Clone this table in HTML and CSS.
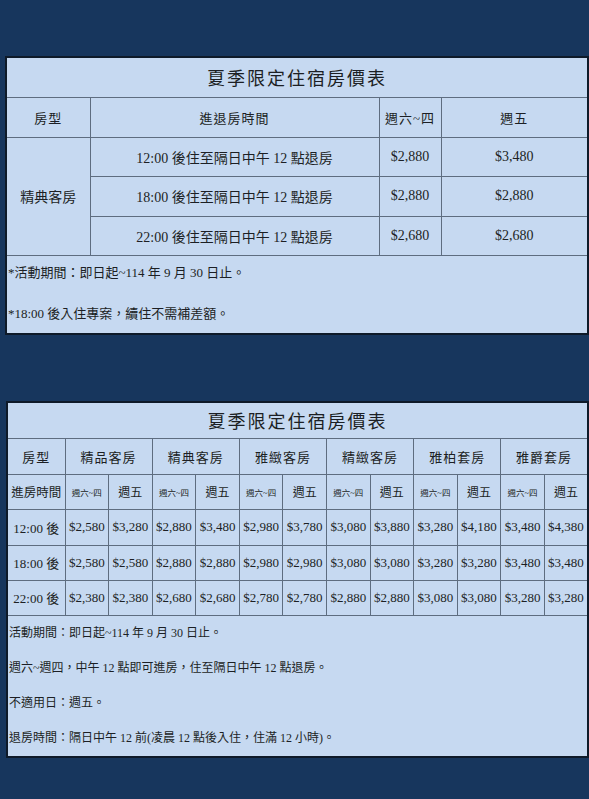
FILE: index.html
```html
<!DOCTYPE html>
<html lang="zh-Hant">
<head>
<meta charset="utf-8">
<title>夏季限定住宿房價表</title>
<link rel="stylesheet" href="styles.css">
</head>
<body>
<main class="page">
  <table class="t1">
    <colgroup>
      <col class="c1-type"><col class="c1-time"><col class="c1-wk"><col class="c1-fri">
    </colgroup>
    <tr class="r-title"><td colspan="4" class="title">夏季限定住宿房價表</td></tr>
    <tr class="r-head"><td>房型</td><td>進退房時間</td><td>週六~四</td><td>週五</td></tr>
    <tr class="r-a"><td rowspan="3">精典客房</td><td>12:00 後住至隔日中午 12 點退房</td><td>$2,880</td><td>$3,480</td></tr>
    <tr class="r-b"><td>18:00 後住至隔日中午 12 點退房</td><td>$2,880</td><td>$2,880</td></tr>
    <tr class="r-a"><td>22:00 後住至隔日中午 12 點退房</td><td>$2,680</td><td>$2,680</td></tr>
    <tr class="r-notes"><td colspan="4" class="notes">
      <div class="note-list">
        <p>*活動期間：即日起~114 年 9 月 30 日止。</p>
        <p>*18:00 後入住專案，續住不需補差額。</p>
      </div>
    </td></tr>
  </table>

  <table class="t2">
    <colgroup>
      <col class="c2-first">
      <col class="c2"><col class="c2"><col class="c2"><col class="c2"><col class="c2"><col class="c2">
      <col class="c2"><col class="c2"><col class="c2"><col class="c2"><col class="c2"><col class="c2">
    </colgroup>
    <tr class="r2-title"><td colspan="13" class="title">夏季限定住宿房價表</td></tr>
    <tr class="r2-h1">
      <td>房型</td>
      <td colspan="2">精品客房</td>
      <td colspan="2">精典客房</td>
      <td colspan="2">雅緻客房</td>
      <td colspan="2">精緻客房</td>
      <td colspan="2">雅柏套房</td>
      <td colspan="2">雅爵套房</td>
    </tr>
    <tr class="r2-h2">
      <td>進房時間</td>
      <td class="tiny">週六~四</td><td>週五</td>
      <td class="tiny">週六~四</td><td>週五</td>
      <td class="tiny">週六~四</td><td>週五</td>
      <td class="tiny">週六~四</td><td>週五</td>
      <td class="tiny">週六~四</td><td>週五</td>
      <td class="tiny">週六~四</td><td>週五</td>
    </tr>
    <tr class="r2-a">
      <td>12:00 後</td>
      <td>$2,580</td><td>$3,280</td><td>$2,880</td><td>$3,480</td><td>$2,980</td><td>$3,780</td>
      <td>$3,080</td><td>$3,880</td><td>$3,280</td><td>$4,180</td><td>$3,480</td><td>$4,380</td>
    </tr>
    <tr class="r2-b">
      <td>18:00 後</td>
      <td>$2,580</td><td>$2,580</td><td>$2,880</td><td>$2,880</td><td>$2,980</td><td>$2,980</td>
      <td>$3,080</td><td>$3,080</td><td>$3,280</td><td>$3,280</td><td>$3,480</td><td>$3,480</td>
    </tr>
    <tr class="r2-b">
      <td>22:00 後</td>
      <td>$2,380</td><td>$2,380</td><td>$2,680</td><td>$2,680</td><td>$2,780</td><td>$2,780</td>
      <td>$2,880</td><td>$2,880</td><td>$3,080</td><td>$3,080</td><td>$3,280</td><td>$3,280</td>
    </tr>
    <tr class="r2-notes"><td colspan="13" class="notes2">
      <p>活動期間：即日起~114 年 9 月 30 日止。</p>
      <p>週六~週四，中午 12 點即可進房，住至隔日中午 12 點退房。</p>
      <p>不適用日：週五。</p>
      <p>退房時間：隔日中午 12 前(凌晨 12 點後入住，住滿 12 小時)。</p>
    </td></tr>
  </table>
</main>
</body>
</html>
```

FILE: styles.css
```css
* { box-sizing: border-box; }
html, body { margin: 0; padding: 0; }
body {
  background: #17365d;
  width: 589px;
  height: 799px;
  overflow: hidden;
  font-family: "Liberation Serif", "Noto Sans CJK TC", serif;
  color: #1c1f24;
}
.page {
  padding: 56px 0 0 5px;
}
table {
  border-collapse: collapse;
  table-layout: fixed;
  background: #c6d9f1;
  border: 2px solid #0e1a29;
}
td {
  border: 1px solid #5e6d80;
  padding: 0;
  text-align: center;
  vertical-align: middle;
  white-space: nowrap;
}
p { margin: 0; }

/* ---------- table 1 ---------- */
.t1 { width: 582px; font-size: 14px; }
.c1-type { width: 84px; }
.c1-time { width: 289px; }
.c1-wk { width: 62px; }
.c1-fri { width: 147px; }
.t1 .title { font-size: 18px; letter-spacing: 2px; font-weight: 400; }
.r-title { height: 40px; }
.r-head { height: 40px; font-size: 13px; }
.r-head td { letter-spacing: 1px; }
.r-a { height: 39px; }
.r-b { height: 40px; }
.r-notes { height: 79px; }
.notes { text-align: left; font-size: 13px; padding: 0 0 0 1px; vertical-align: top; }
.note-list {
  display: flex;
  flex-direction: column;
  gap: 11px;
  padding-top: 2px;
}
.note-list p { line-height: 30px; }

/* ---------- table 2 ---------- */
.t2 { width: 581px; margin: 66px 0 0 1px; font-size: 13px; }
.c2-first { width: 58px; }
.c2 { width: 43.58px; }
.t2 .title { font-size: 18px; letter-spacing: 2px; }
.r2-title { height: 36px; }
.r2-h1 { height: 36px; }
.r2-h1 td { letter-spacing: 1px; }
.r2-h2 { height: 35px; font-size: 12px; }
.r2-h2 td:first-child { font-size: 12.5px; }
.r2-h2 .tiny { font-size: 8.5px; }
.r2-a { height: 36px; }
.r2-b { height: 35px; }
.t2 .r2-a td, .t2 .r2-b td { font-size: 13px; letter-spacing: 0; }
.r2-notes { height: 139px; }
.notes2 { text-align: left; font-size: 12px; vertical-align: top; padding: 0 0 0 1px; }
.notes2 p { line-height: 35px; }
```
